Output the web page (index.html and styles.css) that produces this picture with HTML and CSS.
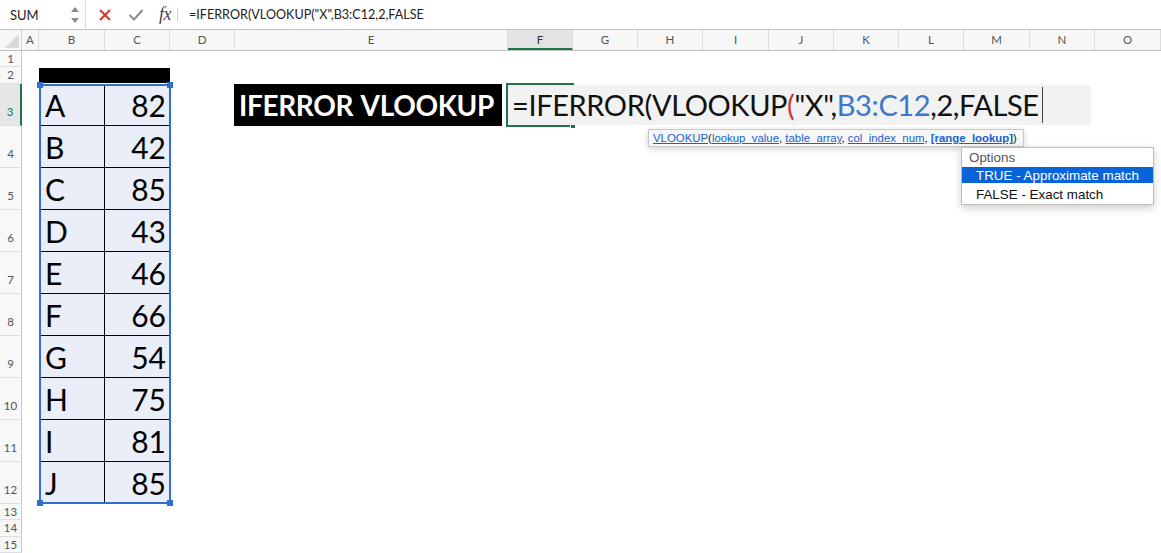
FILE: index.html
```html
<!DOCTYPE html>
<html>
<head>
<meta charset="utf-8">
<link rel="stylesheet" href="styles.css">
</head>
<body>
<div class="app">
  <div class="fbar">
    <div class="namebox">
      <span class="nb-text">SUM</span>
      <svg class="spin" width="10" height="18" viewBox="0 0 10 18"><path d="M1 6 L5 1 L9 6 Z M1 12 L5 17 L9 12 Z" fill="#8a8a8a"/></svg>
    </div>
    <div class="fb-icons">
      <svg class="ic-x" width="14" height="14" viewBox="0 0 14 14"><path d="M2 2 L12 12 M12 2 L2 12" stroke="#d8382c" stroke-width="2.2" fill="none"/></svg>
      <svg class="ic-ok" width="16" height="14" viewBox="0 0 16 14"><path d="M1.5 7 L6 11.5 L14.5 2" stroke="#8c8c8c" stroke-width="2" fill="none"/></svg>
      <span class="fx">fx</span>
      <span class="fb-sep"></span>
    </div>
    <div class="fb-text">=IFERROR(VLOOKUP("X",B3:C12,2,FALSE</div>
  </div>

  <div class="sheet">
    <div class="corner"><svg width="22" height="21" viewBox="0 0 22 21"><path d="M19 4 L19 18 L5 18 Z" fill="#d9d9d9"/></svg></div>
    <div class="colheads">
      <div class="ch w17">A</div>
      <div class="ch w66">B</div>
      <div class="ch w65">C</div>
      <div class="ch w65">D</div>
      <div class="ch w273">E</div>
      <div class="ch w65 ch-active">F</div>
      <div class="ch w65">G</div>
      <div class="ch w65">H</div>
      <div class="ch w66">I</div>
      <div class="ch w65">J</div>
      <div class="ch w65">K</div>
      <div class="ch w65">L</div>
      <div class="ch w66">M</div>
      <div class="ch w65">N</div>
      <div class="ch w66">O</div>
    </div>
    <div class="rowheads">
      <div class="rh h16">1</div>
      <div class="rh h17">2</div>
      <div class="rh h42 rh-active">3</div>
      <div class="rh h42">4</div>
      <div class="rh h42">5</div>
      <div class="rh h42">6</div>
      <div class="rh h42">7</div>
      <div class="rh h42">8</div>
      <div class="rh h42">9</div>
      <div class="rh h42">10</div>
      <div class="rh h42">11</div>
      <div class="rh h42">12</div>
      <div class="rh h16">13</div>
      <div class="rh h17">14</div>
      <div class="rh h16">15</div>
    </div>
    <div class="cells">
      <div class="blackbar"></div>
      <div class="table">
        <div class="td l">A</div><div class="td r">82</div>
        <div class="td l">B</div><div class="td r">42</div>
        <div class="td l">C</div><div class="td r">85</div>
        <div class="td l">D</div><div class="td r">43</div>
        <div class="td l">E</div><div class="td r">46</div>
        <div class="td l">F</div><div class="td r">66</div>
        <div class="td l">G</div><div class="td r">54</div>
        <div class="td l">H</div><div class="td r">75</div>
        <div class="td l">I</div><div class="td r">81</div>
        <div class="td l last">J</div><div class="td r last">85</div>
        <span class="hd tl"></span><span class="hd tr"></span><span class="hd bl"></span><span class="hd br"></span>
      </div>
      <div class="title">IFERROR VLOOKUP</div>
      <div class="activecell"><span class="fillh"></span></div>
      <div class="editor">
        <div class="editor-box">=IFERROR(VLOOKUP<span class="red">(</span>"X",<span class="blue">B3:C12</span>,2,FALSE<span class="caret"></span></div>
        <div class="tooltip"><a>VLOOKUP</a>(<a>lookup_value</a>, <a>table_array</a>, <a>col_index_num</a>, <a class="b">[range_lookup]</a>)</div>
        <div class="dropdown">
          <div class="dd-head">Options</div>
          <div class="dd-item dd-sel">TRUE - Approximate match</div>
          <div class="dd-item dd-next">FALSE - Exact match</div>
        </div>
      </div>
    </div>
  </div>
</div>
</body>
</html>
```
FILE: styles.css
```css
* { box-sizing: border-box; }
html, body { margin: 0; padding: 0; background: #fff; }
body { font-family: Lato, "Liberation Sans", sans-serif; color: #111; overflow: hidden; }
.app { width: 1161px; height: 553px; display: flex; flex-direction: column; }

/* formula bar */
.fbar { height: 30px; display: flex; align-items: stretch; border-bottom: 1px solid #c4c4c4; background: #fff; }
.namebox { width: 86px; display: flex; align-items: center; justify-content: space-between; padding: 0 5px 0 10px; border-right: 1px solid #dadada; }
.nb-text { font-size: 13px; color: #222; }
.spin { display: block; }
.fb-icons { display: flex; align-items: center; width: 97px; padding-left: 12px; }
.ic-x { display: block; }
.ic-ok { display: block; margin-left: 16px; }
.fx { font-family: "Liberation Serif", serif; font-style: italic; font-size: 18px; color: #444; margin-left: 15px; letter-spacing: -0.5px; }
.fb-sep { width: 1px; height: 14px; background: #cfcfcf; margin-left: 6px; }
.fb-text { font-size: 12.6px; line-height: 29px; color: #222; padding-left: 6px; white-space: nowrap; }

/* sheet */
.sheet { flex: 1; display: grid; grid-template-columns: 22px 1139px; grid-template-rows: 21px 502px; }
.corner { background: #f7f7f7; border-right: 1px solid #d0d0d0; border-bottom: 1px solid #c0c0c0; }
.corner svg { display: block; }
.colheads { display: flex; background: #f7f7f7; border-bottom: 1px solid #c0c0c0; }
.ch { flex: none; text-align: center; font-size: 11.5px; line-height: 20px; color: #555; border-right: 1px solid #dcdcdc; }
.w17 { width: 17px; } .w65 { width: 65px; } .w66 { width: 66px; } .w273 { width: 273px; }
.ch-active { background: #e3e3e3; border-bottom: 2px solid #217346; line-height: 19px; color: #333; }

.rowheads { display: flex; flex-direction: column; background: #f8f8f8; }
.rh { flex: none; border-right: 1px solid #c8c8c8; border-bottom: 1px solid #dedede; text-align: center; font-size: 11.5px; color: #555; display: flex; align-items: flex-end; justify-content: center; }
.h16 { height: 16px; padding-bottom: 0; line-height: 15px; }
.h17 { height: 17px; line-height: 16px; }
.h42 { height: 42px; line-height: 14px; padding-bottom: 6px; }
.rh-active { background: #e6e6e6; color: #217346; border-right: 2px solid #217346; }

.cells { display: grid; position: relative;
  grid-template-columns: 17px 66px 65px 65px 273px 65px 65px 65px 66px 65px 65px 65px 66px 65px 66px;
  grid-template-rows: 16px 17px repeat(10, 42px) 16px 17px 16px; }

.blackbar { grid-column: 2 / 4; grid-row: 2 / 3; background: #000; margin: 1px 0 1px 0; }

.table { grid-column: 2 / 4; grid-row: 3 / 13; position: relative; display: grid;
  grid-template-columns: 64px 1fr; grid-template-rows: 40px repeat(8, 42px) 40px;
  background: #e9eef9; border: 2px solid #2f6fd0; margin-right: -1px; }
.td { display: flex; align-items: flex-end; font-size: 30px; line-height: 30px; color: #000; border-bottom: 1px solid #000; padding-bottom: 5px; }
.td.last { border-bottom: none; padding-bottom: 4px; }
.td.l { border-right: 1px solid #000; padding-left: 4px; }
.td.r { justify-content: flex-end; padding-right: 3px; }
.hd { position: absolute; width: 6px; height: 6px; background: #2f6fd0; }
.hd.tl { left: -4px; top: -4px; } .hd.tr { right: -4px; top: -4px; }
.hd.bl { left: -4px; bottom: -4px; } .hd.br { right: -4px; bottom: -4px; }

.title { grid-column: 5 / 6; grid-row: 3 / 4; background: #000; color: #fff; font-weight: 700; font-size: 28px; letter-spacing: -0.35px; word-spacing: 2px; line-height: 42px; padding-left: 5px; white-space: nowrap; overflow: hidden; margin: 0 6px 0 -1px; }

.activecell { grid-column: 6 / 7; grid-row: 3 / 4; border: 2px solid #217346; margin: -1px -1px -1px -2px; position: relative; }
.fillh { position: absolute; right: -4px; bottom: -4px; width: 6px; height: 6px; background: #217346; border: 1px solid #fff; }

.editor { grid-column: 6 / 16; grid-row: 3 / 4; position: relative; z-index: 2; }
.editor-box { width: 583px; height: 40px; margin-top: 1px; background: #f2f2f2; font-size: 29px; letter-spacing: -0.4px; line-height: 40px; padding-left: 4px; white-space: nowrap; color: #111; }
.red { color: #c8373a; }
.blue { color: #3b78c9; }
.caret { display: inline-block; width: 1px; height: 36px; background: #444; vertical-align: top; margin-top: 2px; margin-left: 3px; }

.tooltip { position: absolute; left: 140px; top: 45px; height: 18px; padding: 0 6px 0 4px; background: #f7f7f7; border: 1px solid #c9c9c9; box-shadow: 0 2px 6px rgba(0,0,0,0.18); font-family: "Liberation Sans", Arial, sans-serif; font-size: 11.4px; line-height: 16px; color: #222; white-space: nowrap; }
.tooltip a { color: #1b5fcf; text-decoration: underline; }
.tooltip a.b { font-weight: 700; }

.dropdown { position: absolute; left: 453px; top: 63px; width: 193px; background: #fff; border: 1px solid #bdbdbd; box-shadow: 0 3px 8px rgba(0,0,0,0.2); font-family: "Liberation Sans", Arial, sans-serif; font-size: 13.4px; padding-bottom: 2px; }
.dd-head { height: 19px; line-height: 20px; padding-left: 7px; color: #555; }
.dd-item { padding-left: 14px; color: #111; white-space: nowrap; }
.dd-sel { height: 16px; line-height: 17px; background: #0a64d9; color: #fff; }
.dd-next { height: 19px; line-height: 18px; padding-top: 3px; }
```
